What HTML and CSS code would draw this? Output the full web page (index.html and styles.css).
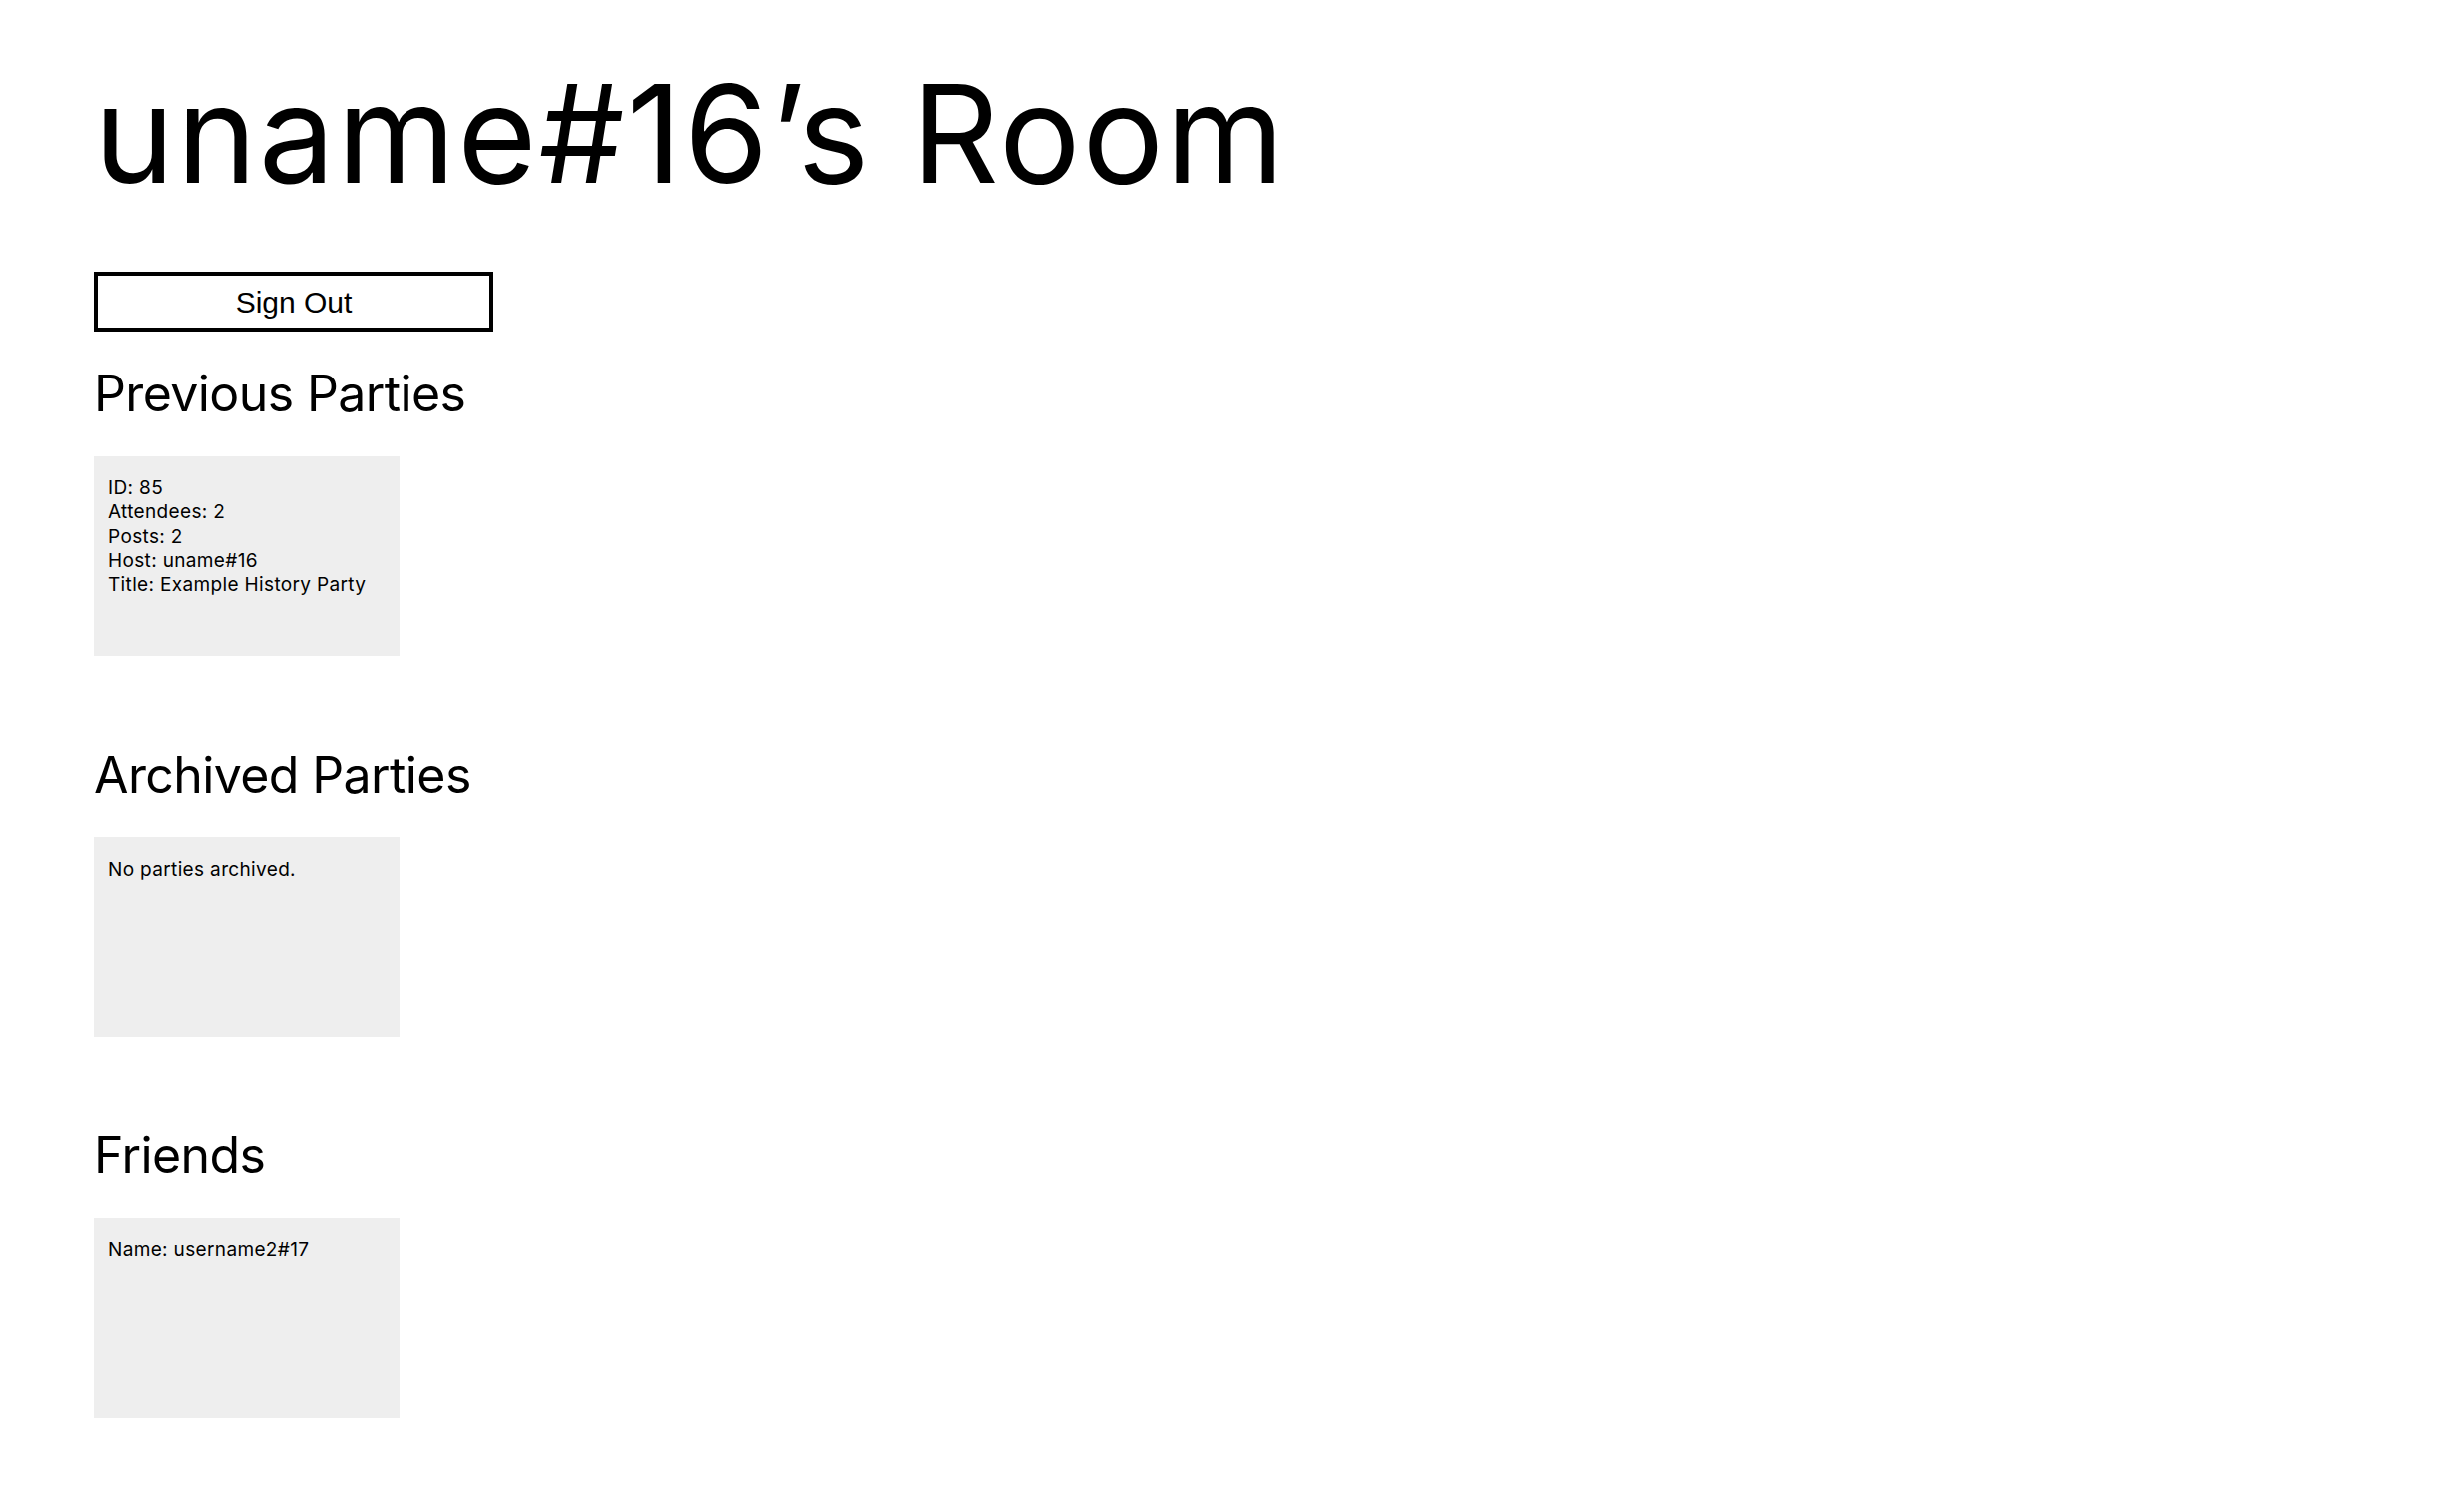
FILE: index.html
```html
<!DOCTYPE html>
<html lang="en">
<head>
<meta charset="utf-8">
<title>uname#16's Room</title>
<link rel="stylesheet" href="styles.css">
</head>
<body>
<main class="room">
  <h1 class="room-title">uname#16’s Room</h1>
  <button class="sign-out" type="button">Sign Out</button>

  <section class="group">
    <h2 class="group-title">Previous Parties</h2>
    <div class="card">
      <div class="line">ID: 85</div>
      <div class="line">Attendees: 2</div>
      <div class="line">Posts: 2</div>
      <div class="line">Host: uname#16</div>
      <div class="line">Title: Example History Party</div>
    </div>
  </section>

  <section class="group">
    <h2 class="group-title">Archived Parties</h2>
    <div class="card">
      <div class="line">No parties archived.</div>
    </div>
  </section>

  <section class="group">
    <h2 class="group-title">Friends</h2>
    <div class="card">
      <div class="line">Name: username2#17</div>
    </div>
  </section>
</main>
</body>
</html>
```

FILE: styles.css
```css
html, body {
  margin: 0;
  padding: 0;
  background: #ffffff;
  color: #000000;
}

body {
  font-family: Inter, "Noto Sans", sans-serif;
}

.room {
  display: flex;
  flex-direction: column;
  align-items: flex-start;
  padding: 66px 0 80px 94px;
}

.room-title {
  margin: 0;
  font-family: Inter, "Noto Sans", sans-serif;
  font-weight: 400;
  font-size: 136px;
  line-height: 1;
  letter-spacing: 2px;
}

.sign-out {
  margin-top: 70px;
  width: 400px;
  height: 60px;
  box-sizing: border-box;
  border: 4px solid #000000;
  background: #ffffff;
  color: #000000;
  font-family: "Liberation Sans", Arial, sans-serif;
  font-size: 30px;
  padding: 2px 0 0 0;
  cursor: pointer;
}

.group {
  display: flex;
  flex-direction: column;
  align-items: flex-start;
  margin-top: 37px;
}

.group + .group {
  margin-top: 94px;
}

.group-title {
  margin: 0;
  font-weight: 400;
  font-size: 50px;
  line-height: 1;
  letter-spacing: -0.6px;
}

.card {
  margin-top: 37.5px;
  width: 306px;
  height: 200px;
  box-sizing: border-box;
  padding: 20.5px 15px 0 14px;
  background: #eeeeee;
  font-size: 19px;
  line-height: 24.3px;
  letter-spacing: 0.35px;
}
```
